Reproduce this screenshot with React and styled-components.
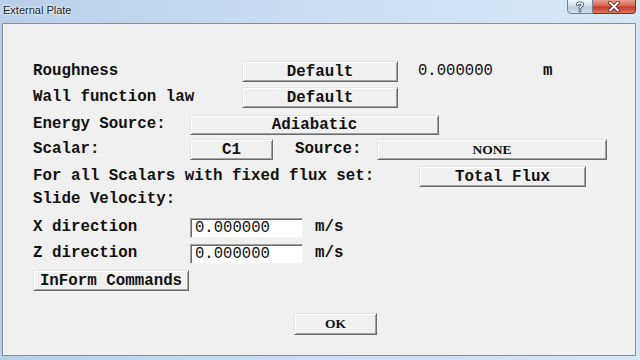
import React from 'react';
import styled, { createGlobalStyle } from 'styled-components';

const GlobalStyle = createGlobalStyle`
  html, body {
    margin: 0;
    padding: 0;
    background: #c4dbf1;
  }
`;

const monoFont = `"Liberation Mono", "Courier New", monospace`;
const serifFont = `"Liberation Serif", "Times New Roman", serif`;

const Window = styled.div`
  width: 640px;
  height: 360px;
  display: flex;
  flex-direction: column;
  background: linear-gradient(to right, #b7cfe9 0%, #c9def3 45%, #d6e7f8 100%);
  overflow: hidden;
`;

const TitleBar = styled.div`
  height: 23px;
  display: flex;
  justify-content: space-between;
  align-items: flex-start;
  padding: 0 4px 0 3px;
`;

const Title = styled.span`
  margin-top: 4px;
  font-family: "Liberation Sans", Arial, sans-serif;
  font-size: 11px;
  color: #1b1b1b;
  text-shadow: 0 0 4px #ffffff, 0 0 2px #ffffff;
`;

const CaptionButtons = styled.div`
  display: flex;
  height: 15px;
  margin-top: -1px;
`;

const CaptionButton = styled.div`
  width: ${(p) => p.$w}px;
  height: 15px;
  box-sizing: border-box;
  display: flex;
  align-items: center;
  justify-content: center;
  border: 1px solid ${(p) => (p.$close ? '#7c2f24' : '#6f8298')};
  border-left-width: ${(p) => (p.$close ? 0 : 1)}px;
  border-radius: ${(p) => (p.$close ? '0 0 4px 0' : '0 0 0 4px')};
  background: ${(p) =>
    p.$close
      ? 'linear-gradient(to bottom, #e8a493 0%, #d7624c 45%, #c33d28 55%, #d8795f 100%)'
      : 'linear-gradient(to bottom, #eef3f9 0%, #d3dfec 45%, #bccbdc 55%, #d3e0ee 100%)'};
`;

const Client = styled.div`
  flex: 1;
  margin: 0 4px 4px 2px;
  background: #f0f0f0;
  border: 1px solid #8a8f96;
  display: flex;
  flex-direction: column;
  padding-left: 30px;
`;

const Row = styled.div`
  display: flex;
  align-items: center;
  height: ${(p) => p.$h || 21}px;
  margin-top: ${(p) => p.$mt}px;
`;

const Label = styled.span`
  width: ${(p) => (p.$w ? `${p.$w}px` : 'auto')};
  flex-shrink: 0;
  font-family: ${monoFont};
  font-weight: bold;
  font-size: 15.8px;
  color: #111;
  white-space: pre;
  margin-top: -2px;
`;

const Value = styled.span`
  width: ${(p) => (p.$w ? `${p.$w}px` : 'auto')};
  font-family: ${monoFont};
  font-size: 15.6px;
  color: #111;
  margin-left: ${(p) => p.$ml || 0}px;
  margin-top: -2px;
`;

const Button = styled.div`
  width: ${(p) => p.$w}px;
  height: ${(p) => p.$h || 21}px;
  flex-shrink: 0;
  box-sizing: border-box;
  margin-left: ${(p) => p.$ml || 0}px;
  display: flex;
  align-items: center;
  justify-content: center;
  background: #f0f0f0;
  border-top: 1px solid #e3e3e3;
  border-left: 1px solid #e3e3e3;
  border-right: 1px solid #6a6a6a;
  border-bottom: 1px solid #6a6a6a;
  box-shadow: inset 1px 1px #ffffff, inset -1px -1px #a0a0a0;
  font-family: ${(p) => (p.$serif ? serifFont : monoFont)};
  font-weight: bold;
  font-size: ${(p) => (p.$serif ? 13.5 : 15.8)}px;
  color: #111;
  white-space: pre;
`;

const Input = styled.div`
  width: 113px;
  height: 20px;
  box-sizing: border-box;
  flex-shrink: 0;
  display: flex;
  align-items: center;
  padding-left: 4px;
  background: #ffffff;
  border-top: 1px solid #a0a0a0;
  border-left: 1px solid #a0a0a0;
  border-right: 1px solid #f4f4f4;
  border-bottom: 1px solid #f4f4f4;
  box-shadow: inset 1px 1px #6a6a6a;
  font-family: ${monoFont};
  font-size: 15.6px;
  color: #111;
`;

const Unit = styled.span`
  margin-left: 12px;
  font-family: ${monoFont};
  font-weight: bold;
  font-size: 15.8px;
  color: #111;
  margin-top: -2px;
`;

const HelpIcon = () => (
  <svg width="10" height="12" viewBox="0 0 10 12">
    <path
      d="M2.5 3.5 C2.5 1.5 7.5 1.5 7.5 3.5 C7.5 5 5 5 5 7"
      fill="none"
      stroke="#3b4e66"
      strokeWidth="3"
      strokeLinecap="round"
    />
    <path
      d="M2.5 3.5 C2.5 1.5 7.5 1.5 7.5 3.5 C7.5 5 5 5 5 7"
      fill="none"
      stroke="#ffffff"
      strokeWidth="1.4"
      strokeLinecap="round"
    />
    <circle cx="5" cy="10" r="1.6" fill="#3b4e66" />
    <circle cx="5" cy="10" r="0.8" fill="#ffffff" />
  </svg>
);

const CloseIcon = () => (
  <svg width="12" height="11" viewBox="0 0 12 11">
    <path d="M2 1.5 L10 9.5 M10 1.5 L2 9.5" stroke="#5a1a12" strokeWidth="3.6" strokeLinecap="round" />
    <path d="M2 1.5 L10 9.5 M10 1.5 L2 9.5" stroke="#ffffff" strokeWidth="2" strokeLinecap="round" />
  </svg>
);

export default function App() {
  return (
    <>
      <GlobalStyle />
      <Window>
        <TitleBar>
          <Title>External Plate</Title>
          <CaptionButtons>
            <CaptionButton $w={26}>
              <HelpIcon />
            </CaptionButton>
            <CaptionButton $w={43} $close>
              <CloseIcon />
            </CaptionButton>
          </CaptionButtons>
        </TitleBar>
        <Client>
          <Row $mt={37}>
            <Label $w={209}>Roughness</Label>
            <Button $w={156}>Default</Button>
            <Value $ml={20} $w={125}>0.000000</Value>
            <Label>m</Label>
          </Row>
          <Row $mt={5}>
            <Label $w={209}>Wall function law</Label>
            <Button $w={156}>Default</Button>
          </Row>
          <Row $mt={7} $h={20}>
            <Label $w={157}>Energy Source:</Label>
            <Button $w={249} $h={20}>Adiabatic</Button>
          </Row>
          <Row $mt={4}>
            <Label $w={157}>Scalar:</Label>
            <Button $w={83}>C1</Button>
            <Label $w={82} style={{ marginLeft: 22 }}>Source:</Label>
            <Button $w={230} $serif>NONE</Button>
          </Row>
          <Row $mt={6}>
            <Label $w={386}>For all Scalars with fixed flux set:</Label>
            <Button $w={167}>Total Flux</Button>
          </Row>
          <Row $mt={3} $h={20}>
            <Label>Slide Velocity:</Label>
          </Row>
          <Row $mt={8} $h={20}>
            <Label $w={157}>X direction</Label>
            <Input>0.000000</Input>
            <Unit>m/s</Unit>
          </Row>
          <Row $mt={6} $h={20}>
            <Label $w={157}>Z direction</Label>
            <Input>0.000000</Input>
            <Unit>m/s</Unit>
          </Row>
          <Row $mt={6}>
            <Button $w={156}>InForm Commands</Button>
          </Row>
          <Row $mt={22} $h={22}>
            <Button $w={83} $h={22} $ml={261} $serif>OK</Button>
          </Row>
        </Client>
      </Window>
    </>
  );
}
